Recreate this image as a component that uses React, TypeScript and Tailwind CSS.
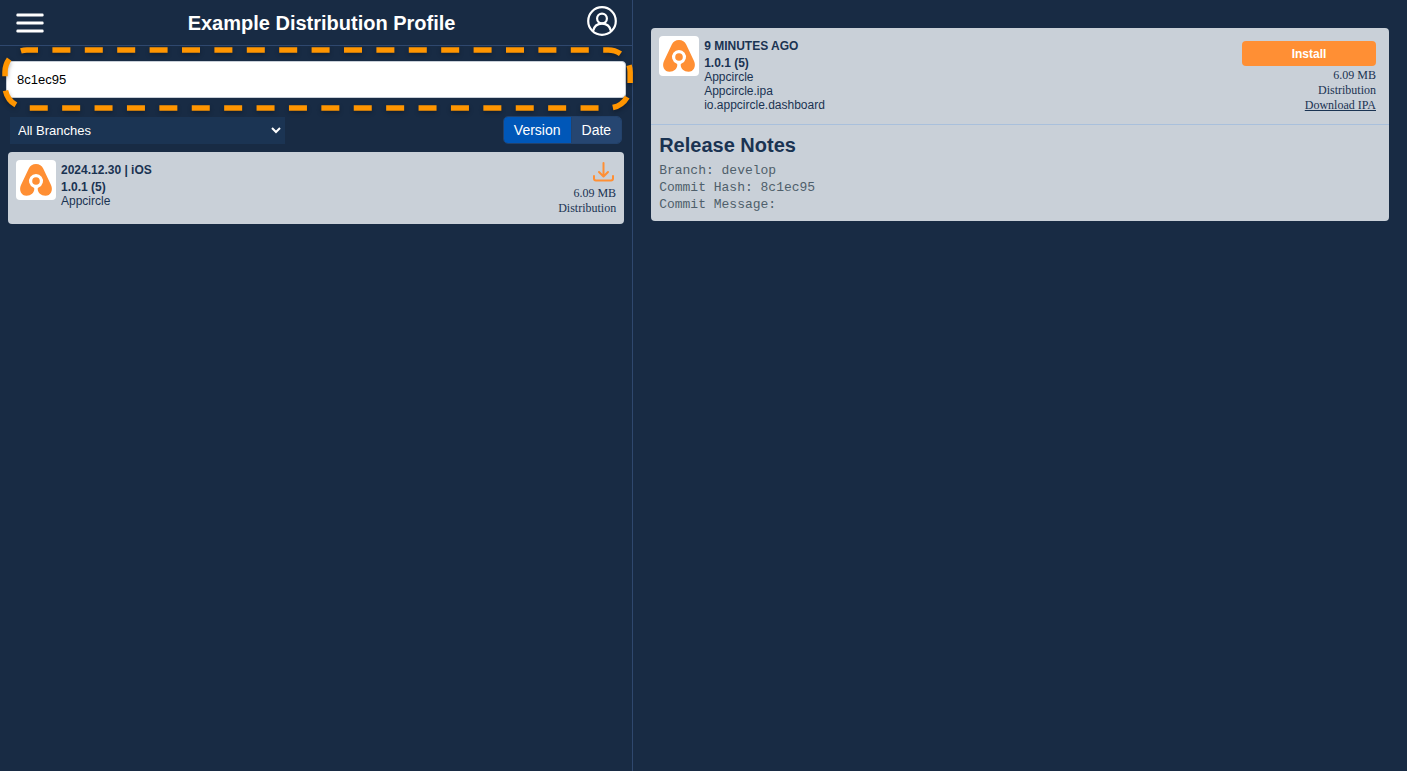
import React, { useState } from 'react';
import { clsx } from 'clsx';

interface Build {
  id: string;
  title: string;
  version: string;
  app: string;
  size: string;
  signing: string;
}

const builds: Build[] = [
  {
    id: '8c1ec95',
    title: '2024.12.30 | iOS',
    version: '1.0.1 (5)',
    app: 'Appcircle',
    size: '6.09 MB',
    signing: 'Distribution',
  },
];

const notes = `Branch: develop
Commit Hash: 8c1ec95
Commit Message:`;

const AppLogo = () => (
  <div className="h-10 w-10 shrink-0 rounded bg-white">
    <svg viewBox="0 0 40 40" className="h-10 w-10" aria-hidden="true">
      <path
        d="M20 4C16.500 4 14.300 5.500 12.800 8.500L5 25C2.500 30.500 5.500 35.800 10.500 35.800C15 35.800 18.300 32.800 18.300 28.800C18.300 28.200 18 27.700 17.400 27.500A7 7 0 1 1 22.600 27.500C22 27.700 21.700 28.200 21.700 28.800C21.700 32.800 25 35.800 29.500 35.800C34.500 35.800 37.500 30.500 35 25L27.200 8.500C25.700 5.500 23.500 4 20 4Z"
        fill="#ff8f34"
      />
      <circle cx="20" cy="21" r="3.800" fill="#ff8f34" />
    </svg>
  </div>
);

const MenuIcon = () => (
  <svg viewBox="0 0 28 20" className="h-5 w-7" fill="#fff" aria-hidden="true">
    <rect x="0.400" y="0.500" width="27.200" height="3" rx="1.200" />
    <rect x="0.400" y="8.500" width="27.200" height="3" rx="1.200" />
    <rect x="0.400" y="16.500" width="27.200" height="3" rx="1.200" />
  </svg>
);

const ProfileIcon = () => (
  <svg viewBox="0 0 30 30" className="h-[30px] w-[30px]" fill="none" stroke="#fff" strokeWidth="2.200" aria-hidden="true">
    <circle cx="15" cy="15" r="13.800" />
    <circle cx="15" cy="12.500" r="4.900" />
    <path d="M6 25C7 20.500 10 17.600 15 17.600S23 20.500 24 25" />
  </svg>
);

const DownloadIcon = () => (
  <svg
    viewBox="0 0 22 20"
    className="h-5 w-[22px]"
    fill="none"
    stroke="#ff8f34"
    strokeWidth="2"
    strokeLinecap="round"
    strokeLinejoin="round"
    aria-hidden="true"
  >
    <path d="M11.500 1V14M7 10L11.500 14.500L16 10" />
    <path d="M2 14V16.500Q2 18.500 4 18.500H19Q21 18.500 21 16.500V14" />
  </svg>
);

// dashed marker drawn around the search box
const SearchHighlight = () => (
  <svg
    className="pointer-events-none absolute -top-[11px] -left-px h-[58px] w-[calc(100%+5px)] overflow-visible drop-shadow-[0_2px_2px_rgba(0,0,0,0.3)]"
    aria-hidden="true"
  >
    <rect
      width="100%"
      height="100%"
      rx="22"
      fill="none"
      stroke="#ff9500"
      strokeWidth="5.500"
      strokeDasharray="18 14.400"
      strokeDashoffset="7"
    />
  </svg>
);

export default function App() {
  const [query, setQuery] = useState('8c1ec95');
  const [sort, setSort] = useState<'version' | 'date'>('version');

  return (
    <div className="flex min-h-screen bg-[#182b44] font-['Liberation_Sans',Arial,sans-serif] text-[#1a3352]">
      <aside className="w-[45%] border-r border-[#2f486e]">
        <header className="flex h-[46px] items-center justify-between border-b border-[#2f486e] pr-[15px] pl-4">
          <button type="button" aria-label="Menu">
            <MenuIcon />
          </button>
          <h1 className="pl-3 text-xl font-bold text-white">Example Distribution Profile</h1>
          <button type="button" aria-label="Profile" className="pb-1">
            <ProfileIcon />
          </button>
        </header>

        <div className="relative mx-1.5 mt-[15px]">
          <input
            type="text"
            aria-label="Search"
            value={query}
            onChange={(e) => setQuery(e.target.value)}
            className="block h-[37px] w-full rounded border border-[#c8cfd8] bg-white px-2.5 text-[13px] text-black outline-none"
          />
          <SearchHighlight />
        </div>

        <div className="mt-[18px] flex items-end justify-between px-2.5">
          <div className="relative">
            <select
              aria-label="Branch"
              className="block h-[27px] w-[275px] appearance-none bg-[#1b3453] px-2 text-[13px] text-white outline-none"
            >
              <option>All Branches</option>
            </select>
            <svg
              viewBox="0 0 10 7"
              className="pointer-events-none absolute top-2.5 right-1 h-[7px] w-2.5"
              fill="none"
              stroke="#fff"
              strokeWidth="2"
              aria-hidden="true"
            >
              <path d="M1 1L5 5L9 1" />
            </svg>
          </div>
          <div className="flex h-7 overflow-hidden rounded-[5px] border border-[#23426b] text-sm text-white">
            <button
              type="button"
              onClick={() => setSort('version')}
              className={clsx('px-2.5', sort === 'version' ? 'bg-[#0057b8]' : 'bg-[#264671]')}
            >
              Version
            </button>
            <button
              type="button"
              onClick={() => setSort('date')}
              className={clsx('border-l border-[#23426b] px-2.5', sort === 'date' ? 'bg-[#0057b8]' : 'bg-[#264671]')}
            >
              Date
            </button>
          </div>
        </div>

        <ul className="mx-2 mt-2">
          {builds.map((build) => (
            <li key={build.id} className="flex h-[72px] rounded bg-[#c9d0d8] p-2">
              <AppLogo />
              <div className="ml-[5px] flex-1 pt-0.5 text-xs leading-[14px]">
                <p className="leading-4 font-bold">{build.title}</p>
                <p className="mt-0.5 font-bold">{build.version}</p>
                <p>{build.app}</p>
              </div>
              <div className="flex flex-col items-end font-['Liberation_Serif',serif] text-xs leading-[15px]">
                <button type="button" aria-label="Download" className="mt-0.5 mr-0.5 mb-1">
                  <DownloadIcon />
                </button>
                <span>{build.size}</span>
                <span>{build.signing}</span>
              </div>
            </li>
          ))}
        </ul>
      </aside>

      <main className="flex-1 px-[18px] pt-7">
        <article className="rounded bg-[#c9d0d8]">
          <div className="flex h-[97px] border-b border-[#a9c0dc] p-2">
            <AppLogo />
            <div className="ml-[5px] flex-1 pt-0.5 text-xs leading-[14px]">
              <p className="leading-4 font-bold">9 MINUTES AGO</p>
              <p className="mt-0.5 font-bold">1.0.1 (5)</p>
              <p>Appcircle</p>
              <p>Appcircle.ipa</p>
              <p>io.appcircle.dashboard</p>
            </div>
            <div className="mr-[5px] flex flex-col items-end pt-[5px] font-['Liberation_Serif',serif] text-xs leading-[15px]">
              <button
                type="button"
                className="mb-0.5 h-[25px] w-[134px] rounded bg-[#ff8f34] font-['Liberation_Sans',Arial,sans-serif] text-xs font-bold text-white"
              >
                Install
              </button>
              <span>6.09 MB</span>
              <span>Distribution</span>
              <a href="#download" className="underline">
                Download IPA
              </a>
            </div>
          </div>
          <div className="px-2 pt-[7px] pb-2">
            <h2 className="text-xl leading-[26px] font-bold">Release Notes</h2>
            <pre className="mt-1 font-['Liberation_Mono',monospace] text-[13px] leading-[17px] text-[#4f5f6b]">{notes}</pre>
          </div>
        </article>
      </main>
    </div>
  );
}
